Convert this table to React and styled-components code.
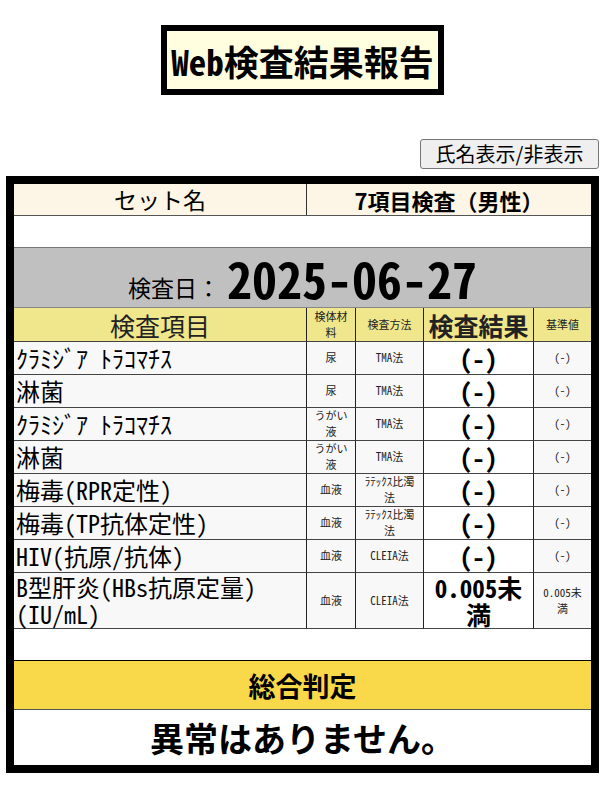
import React from 'react';
import styled, { createGlobalStyle } from 'styled-components';

const GlobalStyle = createGlobalStyle`
  body {
    margin: 0;
    background: #ffffff;
    font-family: "Noto Sans CJK JP", "Noto Sans", sans-serif;
    color: #000;
  }
`;

const mono = `"Noto Sans Mono CJK JP", "Noto Sans CJK JP", monospace`;

const rows = [
  { name: 'ｸﾗﾐｼﾞｱ ﾄﾗｺﾏﾁｽ', sample: '尿', method: 'TMA法', result: '(-)', ref: '(-)' },
  { name: '淋菌', sample: '尿', method: 'TMA法', result: '(-)', ref: '(-)' },
  { name: 'ｸﾗﾐｼﾞｱ ﾄﾗｺﾏﾁｽ', sample: 'うがい液', method: 'TMA法', result: '(-)', ref: '(-)' },
  { name: '淋菌', sample: 'うがい液', method: 'TMA法', result: '(-)', ref: '(-)' },
  { name: '梅毒(RPR定性)', sample: '血液', method: 'ﾗﾃｯｸｽ比濁法', result: '(-)', ref: '(-)' },
  { name: '梅毒(TP抗体定性)', sample: '血液', method: 'ﾗﾃｯｸｽ比濁法', result: '(-)', ref: '(-)' },
  { name: 'HIV(抗原/抗体)', sample: '血液', method: 'CLEIA法', result: '(-)', ref: '(-)' },
  { name: 'B型肝炎(HBs抗原定量)(IU/mL)', sample: '血液', method: 'CLEIA法', result: '0.005未満', ref: '0.005未満', tall: true },
];

const App = () => {
  return (
    <Page>
      <GlobalStyle />
      <TitleWrap>
        <Title>Web検査結果報告</Title>
      </TitleWrap>
      <ButtonRow>
        <ToggleButton type="button">氏名表示/非表示</ToggleButton>
      </ButtonRow>
      <Report>
        <SetRow>
          <SetLabel>セット名</SetLabel>
          <SetValue>7項目検査（男性）</SetValue>
        </SetRow>
        <BlankRow />
        <DateRow>
          <DateLabel>検査日：</DateLabel>
          <DateValue>2025-06-27</DateValue>
        </DateRow>
        <Grid>
          <HeadCell $big>検査項目</HeadCell>
          <HeadCell>検体材料</HeadCell>
          <HeadCell>検査方法</HeadCell>
          <HeadCell $big $bold>検査結果</HeadCell>
          <HeadCell>基準値</HeadCell>
          {rows.map((r, i) => (
            <React.Fragment key={i}>
              <ItemCell $tall={r.tall}>{r.name}</ItemCell>
              <SmallCell $tall={r.tall}>{r.sample}</SmallCell>
              <SmallCell $tall={r.tall}>{r.method}</SmallCell>
              <ResultCell $tall={r.tall}>{r.result}</ResultCell>
              <SmallCell $tall={r.tall}>{r.ref}</SmallCell>
            </React.Fragment>
          ))}
        </Grid>
        <BlankRow $dark />
        <JudgeHead>総合判定</JudgeHead>
        <JudgeBody>異常はありません。</JudgeBody>
      </Report>
    </Page>
  );
};

const Page = styled.div`
  width: 593px;
  padding: 25px 6px 27px;
`;

const TitleWrap = styled.div`
  display: flex;
  justify-content: center;
`;

const Title = styled.h1`
  margin: 0;
  width: 271px;
  height: 58px;
  border: 6px solid #000;
  background: #ffffe0;
  display: flex;
  align-items: center;
  justify-content: center;
  font-family: ${mono};
  font-size: 35px;
  font-weight: 700;
  line-height: 1;
  white-space: nowrap;
`;

const ButtonRow = styled.div`
  display: flex;
  justify-content: flex-end;
  margin-top: 44px;
  margin-bottom: 7px;
`;

const ToggleButton = styled.button`
  height: 30px;
  width: 179px;
  padding: 0 6px;
  font-family: "Noto Sans CJK JP", sans-serif;
  font-size: 20px;
  color: #000;
  background: #efefef;
  border: 1px solid #767676;
  border-radius: 3px;
  line-height: 1;
  white-space: nowrap;
`;

const Report = styled.div`
  border: 8px solid #000;
  background: #fff;
`;

const SetRow = styled.div`
  display: grid;
  grid-template-columns: 293px 1fr;
  height: 31px;
  background: #fdf5e6;
  border-bottom: 1px solid #555;
`;

const SetLabel = styled.div`
  display: flex;
  align-items: center;
  justify-content: center;
  font-size: 23px;
  line-height: 1;
  border-right: 1px solid #333;
`;

const SetValue = styled(SetLabel)`
  font-weight: 700;
  border-right: none;
  font-size: 22px;
`;

const BlankRow = styled.div`
  height: 31px;
  background: #fff;
  border-bottom: 1px solid ${(p) => (p.$dark ? '#000' : '#777')};
`;

const DateRow = styled.div`
  height: 60px;
  background: #c0c0c0;
  display: flex;
  align-items: flex-end;
  justify-content: center;
  gap: 7px;
  padding-bottom: 5px;
  box-sizing: border-box;
  border-bottom: 1px solid #888;
`;

const DateLabel = styled.span`
  font-size: 23px;
  line-height: 1;
  margin-bottom: 3px;
`;

const DateValue = styled.span`
  font-family: ${mono};
  font-size: 50px;
  font-weight: 700;
  line-height: 1;
`;

const Grid = styled.div`
  display: grid;
  grid-template-columns: 293px 49px 68px 110px 1fr;
`;

const Cell = styled.div`
  display: flex;
  align-items: center;
  justify-content: center;
  text-align: center;
  border-right: 1px solid #222;
  border-bottom: 1px solid #444;
  height: ${(p) => (p.$tall ? '55px' : '32px')};
  background: #f8f8f8;
  line-height: 1.1;
  &:nth-child(5n) {
    border-right: none;
  }
`;

const HeadCell = styled(Cell)`
  background: #f0e68c;
  height: 33px;
  font-size: ${(p) => (p.$big ? '25px' : '11px')};
  font-weight: ${(p) => (p.$bold ? 700 : 400)};
  line-height: ${(p) => (p.$big ? 1.2 : 1.45)};
  color: #222;
  padding: 0 3px;
`;

const ItemCell = styled(Cell)`
  justify-content: flex-start;
  text-align: left;
  font-family: ${mono};
  font-size: 24px;
  padding-left: 2px;
  line-height: 1.1;
`;

const SmallCell = styled(Cell)`
  font-family: ${mono};
  font-size: 11px;
  line-height: 1.45;
  padding: 0 4px;
  color: #222;
`;

const ResultCell = styled(Cell)`
  background: #fff;
  font-family: ${mono};
  font-size: 25px;
  font-weight: 700;
  line-height: 1.08;
  padding: 0 6px;
`;

const JudgeHead = styled.div`
  height: 48px;
  background: #f9d949;
  border-bottom: 1px solid #555;
  display: flex;
  align-items: center;
  justify-content: center;
  font-size: 27px;
  font-weight: 700;
`;

const JudgeBody = styled.div`
  height: 55px;
  display: flex;
  align-items: center;
  justify-content: center;
  font-size: 34px;
  font-weight: 700;
`;

export default App;
